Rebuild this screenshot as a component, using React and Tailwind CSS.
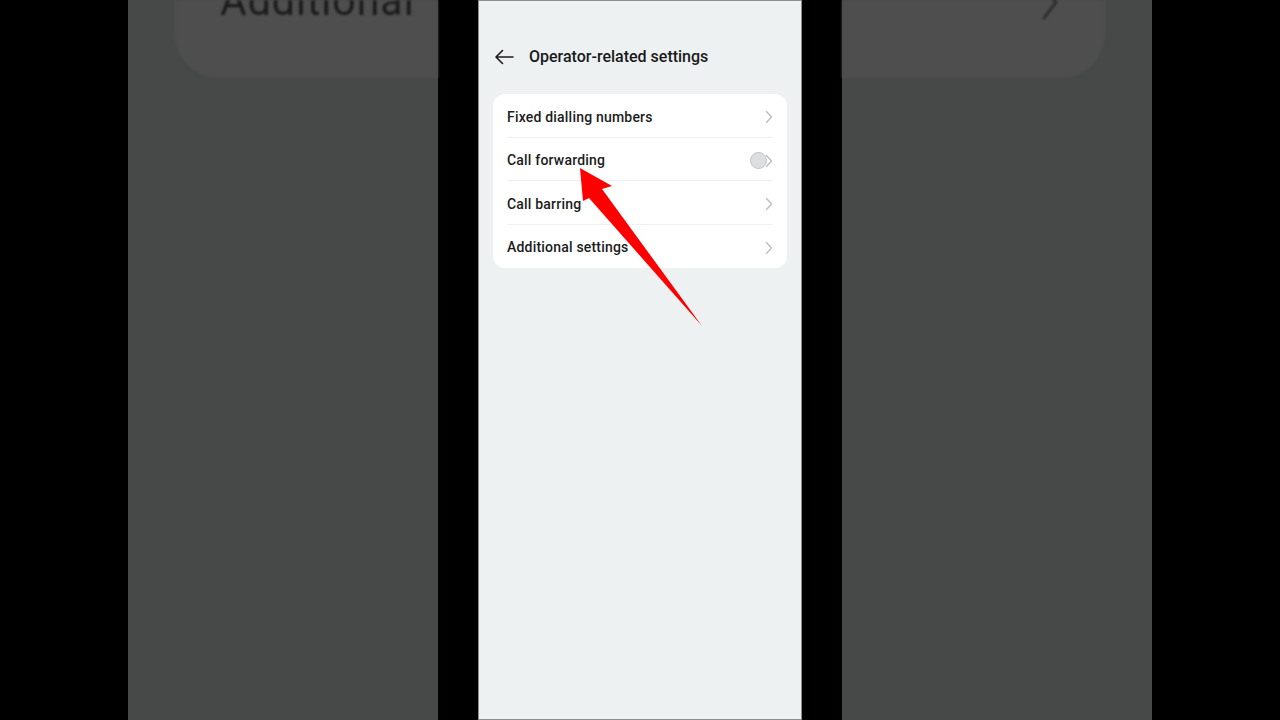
import React from "react";

const Chevron = () => (
  <svg width="8" height="14" viewBox="0 0 8 14" fill="none">
    <path d="M1.5 1.5 L6.5 7 L1.5 12.5" stroke="#b9bcbf" strokeWidth="1.3" strokeLinecap="round" strokeLinejoin="round" />
  </svg>
);

const Row = ({ label, last, toggle }) => (
  <div className="relative h-[43.5px] flex items-center pl-[14px] pr-[14px] pt-[3px]">
    <span className="text-[14px] font-medium text-[#1c1c1c] tracking-[0.2px]">{label}</span>
    <div className="ml-auto relative flex items-center">
      {toggle && (
        <div className="absolute right-[6px] w-[17px] h-[17px] rounded-full bg-[#dcdfe2] border border-[#bfc3c7]" />
      )}
      <Chevron />
    </div>
    {!last && <div className="absolute left-[14px] right-[14px] bottom-0 h-px bg-[#eef0f1]" />}
  </div>
);

export default function App() {
  return (
    <div className="w-[1280px] h-[720px] bg-black flex overflow-hidden" style={{ fontFamily: "Roboto, 'Noto Sans', sans-serif" }}>
      <div className="w-[128px] shrink-0" />
      {/* left blurred background */}
      <div className="w-[310px] shrink-0 bg-[#464948] flex flex-col">
        <div className="ml-[47px] h-[78px] bg-[#4e4e4e] rounded-bl-[44px] relative overflow-hidden blur-[1px]">
          <span className="absolute left-[45px] top-[-29px] text-[41px] text-[#1b1b1b] tracking-[1px]">Additional</span>
        </div>
      </div>
      <div className="w-[40px] shrink-0" />
      {/* phone */}
      <div className="w-[324px] shrink-0 bg-[#edf1f2] border border-[#8d8f8f] flex flex-col">
        <div className="h-[110px] flex flex-col">
          <div className="mt-[44px] h-[24px] flex items-center pl-[14px]">
            <svg width="22" height="22" viewBox="0 0 22 22" fill="none">
              <path d="M20 11 H3 M9.5 4.5 L3 11 L9.5 17.5" stroke="#1c1c1c" strokeWidth="1.6" strokeLinecap="round" strokeLinejoin="round" />
            </svg>
            <span className="ml-[14px] text-[16px] font-medium text-[#1a1a1a]">Operator-related settings</span>
          </div>
        </div>
        <div className="mx-[14px] mt-[-17px] bg-white rounded-[12px] flex flex-col">
          <Row label="Fixed dialling numbers" />
          <Row label="Call forwarding" toggle />
          <Row label="Call barring" />
          <Row label="Additional settings" last />
        </div>
      </div>
      <div className="w-[40px] shrink-0" />
      {/* right blurred background */}
      <div className="w-[310px] shrink-0 bg-[#464948] flex flex-col">
        <div className="mr-[47px] h-[78px] bg-[#4e4e4e] rounded-br-[44px] relative overflow-hidden blur-[1px]">
          <svg className="absolute left-[196px] top-[-8px]" width="24" height="28" viewBox="0 0 24 28" fill="none">
            <path d="M4 0 L18 10 L6 26" stroke="#2a2a2a" strokeWidth="2.5" strokeLinecap="round" />
          </svg>
        </div>
      </div>
      <div className="flex-1" />
      {/* red arrow overlay */}
      <svg className="absolute left-0 top-0 pointer-events-none" width="1280" height="720" viewBox="0 0 1280 720">
        <polygon points="580,168 612,186 602,189 702,326 589,198 583,201" fill="#ff0000" />
      </svg>
    </div>
  );
}
